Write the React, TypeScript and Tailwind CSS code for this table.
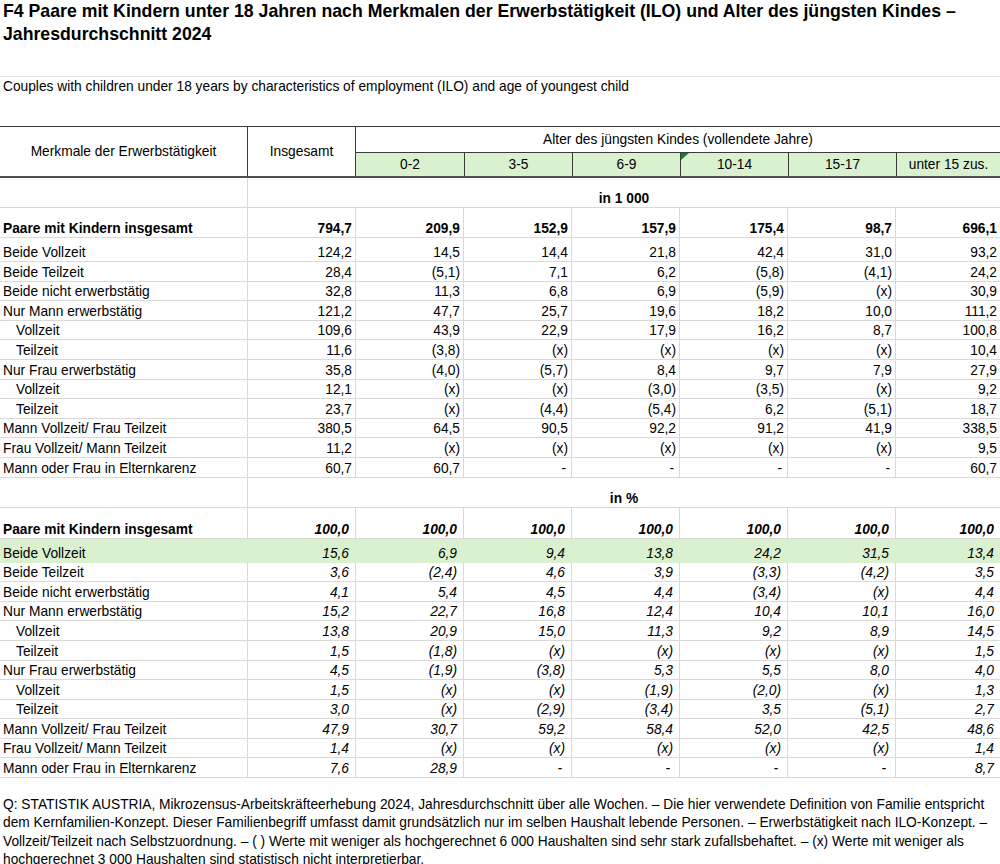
import React from "react";

type R = { label: string; v: string[]; indent?: boolean; bold?: boolean; h: string; green?: boolean };

const W = ["w-[108px]", "w-[108px]", "w-[108px]", "w-[108px]", "w-[108px]", "w-[108px]", "w-[105px]"];
const AGE = ["0-2", "3-5", "6-9", "10-14", "15-17", "unter 15 zus."];
const RH = "h-[19.6px]";

const absRows: R[] = [
  { label: "Paare mit Kindern insgesamt", v: ["794,7", "209,9", "152,9", "157,9", "175,4", "98,7", "696,1"], bold: true, h: "h-[30px]" },
  { label: "Beide Vollzeit", v: ["124,2", "14,5", "14,4", "21,8", "42,4", "31,0", "93,2"], h: "h-[24px]" },
  { label: "Beide Teilzeit", v: ["28,4", "(5,1)", "7,1", "6,2", "(5,8)", "(4,1)", "24,2"], h: RH },
  { label: "Beide nicht erwerbstätig", v: ["32,8", "11,3", "6,8", "6,9", "(5,9)", "(x)", "30,9"], h: RH },
  { label: "Nur Mann erwerbstätig", v: ["121,2", "47,7", "25,7", "19,6", "18,2", "10,0", "111,2"], h: RH },
  { label: "Vollzeit", v: ["109,6", "43,9", "22,9", "17,9", "16,2", "8,7", "100,8"], indent: true, h: RH },
  { label: "Teilzeit", v: ["11,6", "(3,8)", "(x)", "(x)", "(x)", "(x)", "10,4"], indent: true, h: RH },
  { label: "Nur Frau erwerbstätig", v: ["35,8", "(4,0)", "(5,7)", "8,4", "9,7", "7,9", "27,9"], h: RH },
  { label: "Vollzeit", v: ["12,1", "(x)", "(x)", "(3,0)", "(3,5)", "(x)", "9,2"], indent: true, h: RH },
  { label: "Teilzeit", v: ["23,7", "(x)", "(4,4)", "(5,4)", "6,2", "(5,1)", "18,7"], indent: true, h: RH },
  { label: "Mann Vollzeit/ Frau Teilzeit", v: ["380,5", "64,5", "90,5", "92,2", "91,2", "41,9", "338,5"], h: RH },
  { label: "Frau Vollzeit/ Mann Teilzeit", v: ["11,2", "(x)", "(x)", "(x)", "(x)", "(x)", "9,5"], h: RH },
  { label: "Mann oder Frau in Elternkarenz", v: ["60,7", "60,7", "-", "-", "-", "-", "60,7"], h: RH },
];

const pctRows: R[] = [
  { label: "Paare mit Kindern insgesamt", v: ["100,0", "100,0", "100,0", "100,0", "100,0", "100,0", "100,0"], bold: true, h: "h-[31px]" },
  { label: "Beide Vollzeit", v: ["15,6", "6,9", "9,4", "13,8", "24,2", "31,5", "13,4"], h: "h-[24px]", green: true },
  { label: "Beide Teilzeit", v: ["3,6", "(2,4)", "4,6", "3,9", "(3,3)", "(4,2)", "3,5"], h: RH },
  { label: "Beide nicht erwerbstätig", v: ["4,1", "5,4", "4,5", "4,4", "(3,4)", "(x)", "4,4"], h: RH },
  { label: "Nur Mann erwerbstätig", v: ["15,2", "22,7", "16,8", "12,4", "10,4", "10,1", "16,0"], h: RH },
  { label: "Vollzeit", v: ["13,8", "20,9", "15,0", "11,3", "9,2", "8,9", "14,5"], indent: true, h: RH },
  { label: "Teilzeit", v: ["1,5", "(1,8)", "(x)", "(x)", "(x)", "(x)", "1,5"], indent: true, h: RH },
  { label: "Nur Frau erwerbstätig", v: ["4,5", "(1,9)", "(3,8)", "5,3", "5,5", "8,0", "4,0"], h: RH },
  { label: "Vollzeit", v: ["1,5", "(x)", "(x)", "(1,9)", "(2,0)", "(x)", "1,3"], indent: true, h: RH },
  { label: "Teilzeit", v: ["3,0", "(x)", "(2,9)", "(3,4)", "3,5", "(5,1)", "2,7"], indent: true, h: RH },
  { label: "Mann Vollzeit/ Frau Teilzeit", v: ["47,9", "30,7", "59,2", "58,4", "52,0", "42,5", "48,6"], h: RH },
  { label: "Frau Vollzeit/ Mann Teilzeit", v: ["1,4", "(x)", "(x)", "(x)", "(x)", "(x)", "1,4"], h: RH },
  { label: "Mann oder Frau in Elternkarenz", v: ["7,6", "28,9", "-", "-", "-", "-", "8,7"], h: RH },
];

function DataRow({ r, pct }: { r: R; pct: boolean }) {
  const lineCls = r.green ? "border-transparent" : "border-[#d9d9d9]";
  return (
    <div className={`flex ${r.h} border-b ${lineCls} ${r.green ? "bg-[#daf1d0]" : ""}`}>
      <div
        className={`w-[247px] shrink-0 flex items-end leading-[17px] whitespace-nowrap ${r.indent ? "pl-[16px]" : "pl-[3px]"} ${r.bold ? "font-bold" : ""}`}
      >
        {r.label}
      </div>
      {r.v.map((x, i) => {
        const dash = x === "-";
        const pad = pct ? (dash ? "pr-[9px]" : "pr-[6px]") : dash ? "pr-[5px]" : "pr-[3px]";
        return (
          <div
            key={i}
            className={`${W[i]} shrink-0 border-l ${lineCls} flex items-end justify-end leading-[17px] whitespace-nowrap ${pad} ${r.bold ? "font-bold" : ""} ${pct ? "italic" : ""}`}
          >
            {x}
          </div>
        );
      })}
    </div>
  );
}

function UnitRow({ text, h }: { text: string; h: string }) {
  return (
    <div className={`flex ${h} border-b border-[#d9d9d9]`}>
      <div className="w-[247px] shrink-0" />
      <div className="flex-1 border-l border-[#d9d9d9] flex items-end justify-center leading-[17px] font-bold">
        {text}
      </div>
    </div>
  );
}

export default function App() {
  return (
    <div className="w-[1000px] h-[864px] overflow-hidden bg-white text-black font-['Liberation_Sans',Arial,sans-serif] text-[13.75px]">
      <div className="px-[3px] text-[17.7px] leading-[23px] font-bold whitespace-nowrap">
        F4 Paare mit Kindern unter 18 Jahren nach Merkmalen der Erwerbstätigkeit (ILO) und Alter des jüngsten Kindes –
        <br />
        Jahresdurchschnitt 2024
      </div>
      <div className="mt-[30px] h-px bg-[#e2e2e2]" />
      <div className="pt-[1px] pl-[3px] leading-[17px] whitespace-nowrap">
        Couples with children under 18 years by characteristics of employment (ILO) and age of youngest child
      </div>

      <div className="mt-[31px]">
        <div className="flex h-[52px] border-t border-b-2 border-t-[#3a3a3a] border-b-[#505050]">
          <div className="w-[247px] shrink-0 flex items-center justify-center leading-[17px]">
            Merkmale der Erwerbstätigkeit
          </div>
          <div className="w-[108px] shrink-0 border-l border-[#3a3a3a] flex items-center justify-center leading-[17px]">
            Insgesamt
          </div>
          <div className="flex-1 border-l border-[#3a3a3a] flex flex-col">
            <div className="h-[25px] flex items-center justify-center leading-[17px] whitespace-nowrap">
              Alter des jüngsten Kindes (vollendete Jahre)
            </div>
            <div className="flex flex-1 border-t border-[#3a3a3a] bg-[#daf1d0]">
              {AGE.map((a, i) => (
                <div
                  key={a}
                  className={`${i === AGE.length - 1 ? "flex-1" : "w-[108px]"} shrink-0 relative flex items-center justify-center leading-[17px] whitespace-nowrap ${i > 0 ? "border-l border-[#3a3a3a]" : ""}`}
                >
                  {a === "10-14" && (
                    <svg className="absolute left-0 top-0" width="8" height="7" viewBox="0 0 8 7">
                      <polygon points="0,0 8,0 0,7" fill="#1c7a33" />
                    </svg>
                  )}
                  {a}
                </div>
              ))}
            </div>
          </div>
        </div>

        <UnitRow text="in 1 000" h="h-[30px]" />
        {absRows.map((r, i) => (
          <DataRow key={"a" + i} r={r} pct={false} />
        ))}
        <UnitRow text="in %" h="h-[30px]" />
        {pctRows.map((r, i) => (
          <DataRow key={"p" + i} r={r} pct={true} />
        ))}
      </div>

      <div className="mt-[18px] pl-[3px] leading-[18.3px] whitespace-nowrap">
        Q: STATISTIK AUSTRIA, Mikrozensus-Arbeitskräfteerhebung 2024, Jahresdurchschnitt über alle Wochen. – Die hier verwendete Definition von Familie entspricht
        <br />
        dem Kernfamilien-Konzept. Dieser Familienbegriff umfasst damit grundsätzlich nur im selben Haushalt lebende Personen. – Erwerbstätigkeit nach ILO-Konzept. –
        <br />
        Vollzeit/Teilzeit nach Selbstzuordnung. – ( ) Werte mit weniger als hochgerechnet 6 000 Haushalten sind sehr stark zufallsbehaftet. – (x) Werte mit weniger als
        <br />
        hochgerechnet 3 000 Haushalten sind statistisch nicht interpretierbar.
      </div>
    </div>
  );
}
